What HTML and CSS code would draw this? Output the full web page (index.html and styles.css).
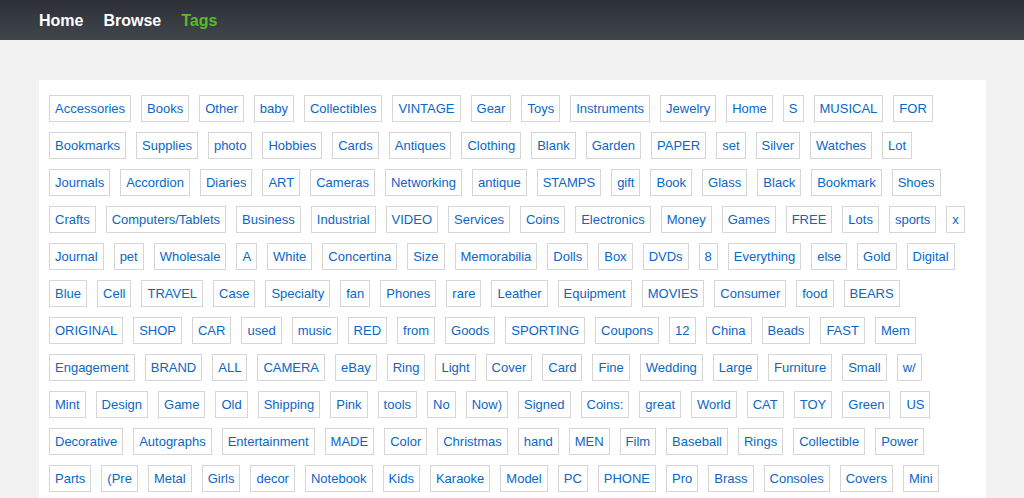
FILE: index.html
```html
<!DOCTYPE html>
<html>
<head>
<meta charset="utf-8">
<link rel="stylesheet" href="styles.css">
</head>
<body>
<header class="topbar">
  <nav class="nav">
    <a class="nav-link" href="#">Home</a>
    <a class="nav-link" href="#">Browse</a>
    <a class="nav-link active" href="#">Tags</a>
  </nav>
</header>
<main class="page">
  <section class="panel">
    <ul class="tags">
      <li><a class="tag" href="#">Accessories</a></li>
      <li><a class="tag" href="#">Books</a></li>
      <li><a class="tag" href="#">Other</a></li>
      <li><a class="tag" href="#">baby</a></li>
      <li><a class="tag" href="#">Collectibles</a></li>
      <li><a class="tag" href="#">VINTAGE</a></li>
      <li><a class="tag" href="#">Gear</a></li>
      <li><a class="tag" href="#">Toys</a></li>
      <li><a class="tag" href="#">Instruments</a></li>
      <li><a class="tag" href="#">Jewelry</a></li>
      <li><a class="tag" href="#">Home</a></li>
      <li><a class="tag" href="#">S</a></li>
      <li><a class="tag" href="#">MUSICAL</a></li>
      <li><a class="tag" href="#">FOR</a></li>
      <li><a class="tag" href="#">Bookmarks</a></li>
      <li><a class="tag" href="#">Supplies</a></li>
      <li><a class="tag" href="#">photo</a></li>
      <li><a class="tag" href="#">Hobbies</a></li>
      <li><a class="tag" href="#">Cards</a></li>
      <li><a class="tag" href="#">Antiques</a></li>
      <li><a class="tag" href="#">Clothing</a></li>
      <li><a class="tag" href="#">Blank</a></li>
      <li><a class="tag" href="#">Garden</a></li>
      <li><a class="tag" href="#">PAPER</a></li>
      <li><a class="tag" href="#">set</a></li>
      <li><a class="tag" href="#">Silver</a></li>
      <li><a class="tag" href="#">Watches</a></li>
      <li><a class="tag" href="#">Lot</a></li>
      <li><a class="tag" href="#">Journals</a></li>
      <li><a class="tag" href="#">Accordion</a></li>
      <li><a class="tag" href="#">Diaries</a></li>
      <li><a class="tag" href="#">ART</a></li>
      <li><a class="tag" href="#">Cameras</a></li>
      <li><a class="tag" href="#">Networking</a></li>
      <li><a class="tag" href="#">antique</a></li>
      <li><a class="tag" href="#">STAMPS</a></li>
      <li><a class="tag" href="#">gift</a></li>
      <li><a class="tag" href="#">Book</a></li>
      <li><a class="tag" href="#">Glass</a></li>
      <li><a class="tag" href="#">Black</a></li>
      <li><a class="tag" href="#">Bookmark</a></li>
      <li><a class="tag" href="#">Shoes</a></li>
      <li><a class="tag" href="#">Crafts</a></li>
      <li><a class="tag" href="#">Computers/Tablets</a></li>
      <li><a class="tag" href="#">Business</a></li>
      <li><a class="tag" href="#">Industrial</a></li>
      <li><a class="tag" href="#">VIDEO</a></li>
      <li><a class="tag" href="#">Services</a></li>
      <li><a class="tag" href="#">Coins</a></li>
      <li><a class="tag" href="#">Electronics</a></li>
      <li><a class="tag" href="#">Money</a></li>
      <li><a class="tag" href="#">Games</a></li>
      <li><a class="tag" href="#">FREE</a></li>
      <li><a class="tag" href="#">Lots</a></li>
      <li><a class="tag" href="#">sports</a></li>
      <li><a class="tag" href="#">x</a></li>
      <li><a class="tag" href="#">Journal</a></li>
      <li><a class="tag" href="#">pet</a></li>
      <li><a class="tag" href="#">Wholesale</a></li>
      <li><a class="tag" href="#">A</a></li>
      <li><a class="tag" href="#">White</a></li>
      <li><a class="tag" href="#">Concertina</a></li>
      <li><a class="tag" href="#">Size</a></li>
      <li><a class="tag" href="#">Memorabilia</a></li>
      <li><a class="tag" href="#">Dolls</a></li>
      <li><a class="tag" href="#">Box</a></li>
      <li><a class="tag" href="#">DVDs</a></li>
      <li><a class="tag" href="#">8</a></li>
      <li><a class="tag" href="#">Everything</a></li>
      <li><a class="tag" href="#">else</a></li>
      <li><a class="tag" href="#">Gold</a></li>
      <li><a class="tag" href="#">Digital</a></li>
      <li><a class="tag" href="#">Blue</a></li>
      <li><a class="tag" href="#">Cell</a></li>
      <li><a class="tag" href="#">TRAVEL</a></li>
      <li><a class="tag" href="#">Case</a></li>
      <li><a class="tag" href="#">Specialty</a></li>
      <li><a class="tag" href="#">fan</a></li>
      <li><a class="tag" href="#">Phones</a></li>
      <li><a class="tag" href="#">rare</a></li>
      <li><a class="tag" href="#">Leather</a></li>
      <li><a class="tag" href="#">Equipment</a></li>
      <li><a class="tag" href="#">MOVIES</a></li>
      <li><a class="tag" href="#">Consumer</a></li>
      <li><a class="tag" href="#">food</a></li>
      <li><a class="tag" href="#">BEARS</a></li>
      <li><a class="tag" href="#">ORIGINAL</a></li>
      <li><a class="tag" href="#">SHOP</a></li>
      <li><a class="tag" href="#">CAR</a></li>
      <li><a class="tag" href="#">used</a></li>
      <li><a class="tag" href="#">music</a></li>
      <li><a class="tag" href="#">RED</a></li>
      <li><a class="tag" href="#">from</a></li>
      <li><a class="tag" href="#">Goods</a></li>
      <li><a class="tag" href="#">SPORTING</a></li>
      <li><a class="tag" href="#">Coupons</a></li>
      <li><a class="tag" href="#">12</a></li>
      <li><a class="tag" href="#">China</a></li>
      <li><a class="tag" href="#">Beads</a></li>
      <li><a class="tag" href="#">FAST</a></li>
      <li><a class="tag" href="#">Mem</a></li>
      <li><a class="tag" href="#">Engagement</a></li>
      <li><a class="tag" href="#">BRAND</a></li>
      <li><a class="tag" href="#">ALL</a></li>
      <li><a class="tag" href="#">CAMERA</a></li>
      <li><a class="tag" href="#">eBay</a></li>
      <li><a class="tag" href="#">Ring</a></li>
      <li><a class="tag" href="#">Light</a></li>
      <li><a class="tag" href="#">Cover</a></li>
      <li><a class="tag" href="#">Card</a></li>
      <li><a class="tag" href="#">Fine</a></li>
      <li><a class="tag" href="#">Wedding</a></li>
      <li><a class="tag" href="#">Large</a></li>
      <li><a class="tag" href="#">Furniture</a></li>
      <li><a class="tag" href="#">Small</a></li>
      <li><a class="tag" href="#">w/</a></li>
      <li><a class="tag" href="#">Mint</a></li>
      <li><a class="tag" href="#">Design</a></li>
      <li><a class="tag" href="#">Game</a></li>
      <li><a class="tag" href="#">Old</a></li>
      <li><a class="tag" href="#">Shipping</a></li>
      <li><a class="tag" href="#">Pink</a></li>
      <li><a class="tag" href="#">tools</a></li>
      <li><a class="tag" href="#">No</a></li>
      <li><a class="tag" href="#">Now)</a></li>
      <li><a class="tag" href="#">Signed</a></li>
      <li><a class="tag" href="#">Coins:</a></li>
      <li><a class="tag" href="#">great</a></li>
      <li><a class="tag" href="#">World</a></li>
      <li><a class="tag" href="#">CAT</a></li>
      <li><a class="tag" href="#">TOY</a></li>
      <li><a class="tag" href="#">Green</a></li>
      <li><a class="tag" href="#">US</a></li>
      <li><a class="tag" href="#">Decorative</a></li>
      <li><a class="tag" href="#">Autographs</a></li>
      <li><a class="tag" href="#">Entertainment</a></li>
      <li><a class="tag" href="#">MADE</a></li>
      <li><a class="tag" href="#">Color</a></li>
      <li><a class="tag" href="#">Christmas</a></li>
      <li><a class="tag" href="#">hand</a></li>
      <li><a class="tag" href="#">MEN</a></li>
      <li><a class="tag" href="#">Film</a></li>
      <li><a class="tag" href="#">Baseball</a></li>
      <li><a class="tag" href="#">Rings</a></li>
      <li><a class="tag" href="#">Collectible</a></li>
      <li><a class="tag" href="#">Power</a></li>
      <li><a class="tag" href="#">Parts</a></li>
      <li><a class="tag" href="#">(Pre</a></li>
      <li><a class="tag" href="#">Metal</a></li>
      <li><a class="tag" href="#">Girls</a></li>
      <li><a class="tag" href="#">decor</a></li>
      <li><a class="tag" href="#">Notebook</a></li>
      <li><a class="tag" href="#">Kids</a></li>
      <li><a class="tag" href="#">Karaoke</a></li>
      <li><a class="tag" href="#">Model</a></li>
      <li><a class="tag" href="#">PC</a></li>
      <li><a class="tag" href="#">PHONE</a></li>
      <li><a class="tag" href="#">Pro</a></li>
      <li><a class="tag" href="#">Brass</a></li>
      <li><a class="tag" href="#">Consoles</a></li>
      <li><a class="tag" href="#">Covers</a></li>
      <li><a class="tag" href="#">Mini</a></li>
    </ul>
  </section>
</main>
</body>
</html>
```
FILE: styles.css
```css
* {
  box-sizing: border-box;
}

html, body {
  margin: 0;
  padding: 0;
}

body {
  background: #f2f2f2;
  font-family: "Liberation Sans", Arial, Helvetica, sans-serif;
}

.topbar {
  height: 40px;
  background: linear-gradient(#2c2f35, #41464e);
}

.nav {
  display: flex;
  align-items: center;
  gap: 20px;
  height: 40px;
  padding-left: 39px;
  padding-top: 1px;
}

.nav-link {
  color: #ffffff;
  font-weight: bold;
  font-size: 16px;
  text-decoration: none;
}

.nav-link.active {
  color: #5cb82c;
}

.page {
  padding: 40px 38px 0 39px;
}

.panel {
  background: #ffffff;
  padding: 15px 20px 0 10px;
  min-height: 480px;
}

.tags {
  list-style: none;
  margin: 0;
  padding: 0;
  display: flex;
  flex-wrap: wrap;
  gap: 10px;
}

.tag {
  display: block;
  border: 1px solid #d6d6d6;
  padding: 0 5px;
  line-height: 25px;
  font-size: 13px;
  color: #0b66c6;
  text-decoration: none;
}
```
